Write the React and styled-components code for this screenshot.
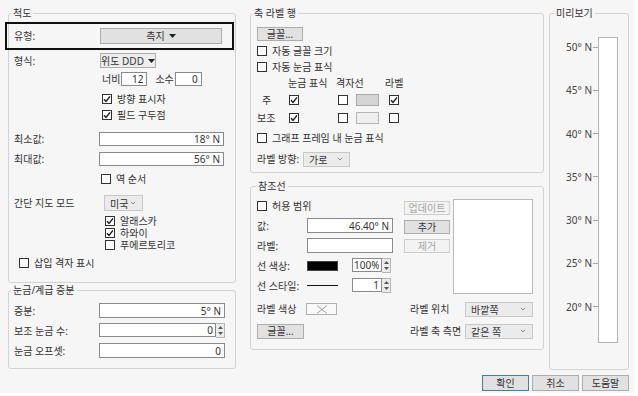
import styled, { createGlobalStyle } from 'styled-components'

const GlobalStyle = createGlobalStyle`
  body {
    margin: 0;
    background: #ffffff;
    font-family: "Noto Sans", "Noto Sans CJK KR", sans-serif;
    font-size: 10px;
    color: #333333;
  }
  * { box-sizing: border-box; }
`

const Dialog = styled.div`
  width: 634px;
  height: 393px;
  background: #f6f6f6;
  padding: 6px 5px 0 8px;
  display: flex;
  flex-direction: column;
`

const Columns = styled.div`
  display: flex;
  align-items: flex-start;
`

const Column = styled.div`
  width: ${p => p.$w}px;
  margin-left: ${p => p.$ml || 0}px;
  display: flex;
  flex-direction: column;
`

const Group = styled.fieldset`
  margin: ${p => p.$mt || 0}px 0 0 0;
  height: ${p => p.$h}px;
  padding: 0 ${p => p.$pr ?? 10}px 0 ${p => p.$pl ?? 5}px;
  border: 1px solid #d3d3d3;
  border-radius: 3px;
  min-width: 0;
`

const Legend = styled.legend`
  margin-left: ${p => p.$offset || 0}px;
  padding: 0 2px;
  height: 14px;
  line-height: 14px;
  font-size: 10px;
`

const Stack = styled.div`
  display: flex;
  flex-direction: column;
`

const Row = styled.div`
  display: grid;
  grid-template-columns: ${p => p.$cols};
  align-items: center;
  height: ${p => p.$h}px;
  margin-top: ${p => p.$mt || 0}px;
`

const TypeRow = styled(Row)`
  margin-left: -9px;
  margin-right: -9px;
  padding-left: 7px;
  border: 2px solid #111111;
`

const Label = styled.span`
  white-space: nowrap;
  line-height: 12px;
`

const Inline = styled.div`
  display: flex;
  align-items: center;
  height: ${p => p.$h}px;
  margin-top: ${p => p.$mt || 0}px;
  padding-left: ${p => p.$pl || 0}px;
  gap: ${p => p.$gap || 0}px;
`

const TextBox = styled.input`
  width: ${p => (p.$w ? `${p.$w}px` : '100%')};
  height: ${p => p.$h || 14}px;
  margin-left: ${p => p.$ml || 0}px;
  border: 1px solid #8a8a8a;
  background: #ffffff;
  padding: 0 ${p => p.$pad ?? 3}px 0 1px;
  font: inherit;
  color: #333333;
  text-align: right;
  outline: none;
`

const Btn = styled.button`
  width: ${p => p.$w}px;
  height: ${p => p.$h || 14}px;
  padding: 0;
  font: inherit;
  line-height: 1;
  color: ${p => (p.disabled ? '#a5a5a5' : '#333333')};
  background: ${p => (p.disabled ? '#f3f3f3' : p.$light ? '#ededed' : '#e1e1e1')};
  border: 1px solid ${p => (p.$primary ? '#3c7fb1' : p.disabled ? '#cdcdcd' : '#adadad')};
  display: flex;
  align-items: center;
  justify-content: center;
  gap: 4px;
`

const Combo = styled.div`
  width: ${p => p.$w}px;
  height: ${p => p.$h || 15}px;
  border: 1px solid #c8c8c8;
  background: #ebebeb;
  display: flex;
  align-items: center;
  justify-content: space-between;
  padding: 0 6px 0 5px;
`

const Box = styled.span`
  width: 10px;
  height: 10px;
  flex: none;
  border: 1px solid #333333;
  background: #ffffff;
  display: inline-flex;
  align-items: center;
  justify-content: center;
`

const CheckRow = styled(Inline)`
  gap: 5px;
`

const Swatch = styled.span`
  width: ${p => p.$w || 23}px;
  height: ${p => p.$h || 12}px;
  margin-left: ${p => p.$ml || 0}px;
  border: 1px solid ${p => p.$line || '#aaaaaa'};
  background: ${p => p.$fill};
  display: inline-flex;
  align-items: center;
  justify-content: center;
`

const LineSample = styled.span`
  width: 31px;
  height: 1px;
  background: #111111;
`

const SpinWrap = styled.div`
  display: flex;
  margin-left: ${p => p.$ml || 0}px;
  height: ${p => p.$h || 15}px;
`

const Spinner = styled.div`
  width: 9px;
  display: flex;
  flex-direction: column;
  border: 1px solid #b5b5b5;
  border-left: none;
  background: #ececec;
  & > span {
    flex: 1;
    display: flex;
    align-items: center;
    justify-content: center;
  }
`

const MarkGrid = styled.div`
  display: grid;
  grid-template-columns: 31px 48px 49px 40px;
  grid-template-rows: 14px 16px 16px;
  row-gap: 2px;
  margin-top: 1px;
  align-items: center;
`

const Cell = styled.div`
  display: flex;
  align-items: center;
  padding-left: ${p => p.$pl || 0}px;
`

const RefTop = styled.div`
  display: flex;
  align-items: flex-start;
  height: 96px;
  margin-top: 5px;
`

const RefForm = styled.div`
  width: 136px;
  display: flex;
  flex-direction: column;
  gap: 5px;
`

const ButtonStack = styled.div`
  width: 46px;
  margin-left: 11px;
  margin-top: 3px;
  display: flex;
  flex-direction: column;
  gap: 5px;
`

const ListBox = styled.div`
  width: 82px;
  height: 95px;
  margin-left: 3px;
  margin-top: 1px;
  background: #ffffff;
  border: 1px solid #b9b9b9;
`

const PreviewBody = styled.div`
  display: flex;
  justify-content: flex-end;
  align-items: flex-start;
  padding-top: 17px;
`

const Axis = styled.div`
  display: flex;
  flex-direction: column;
  gap: 31.3px;
  margin-top: 4px;
`

const Tick = styled.div`
  display: flex;
  align-items: center;
  justify-content: flex-end;
  height: 12px;
  gap: 1px;
  color: #444444;
  white-space: nowrap;
  &::after {
    content: '';
    width: 5px;
    height: 1px;
    background: #a8a8a8;
  }
`

const Bar = styled.div`
  width: 20px;
  height: 306px;
  background: #ffffff;
  border: 1px solid #b3b3b3;
`

const Footer = styled.div`
  display: flex;
  justify-content: flex-end;
  gap: 3px;
  margin-top: 5px;
`

const Caret = () => (
  <svg width="7" height="4" viewBox="0 0 7 4">
    <path d="M0 0 L7 0 L3.5 4 Z" fill="#222" />
  </svg>
)

const Chevron = () => (
  <svg width="6" height="4" viewBox="0 0 6 4">
    <path d="M0.8 0.8 L3 3 L5.2 0.8" stroke="#8a8a8a" strokeWidth="1" fill="none" />
  </svg>
)

const Check = ({ on, children, h = 16, mt, pl }) => (
  <CheckRow $h={h} $mt={mt} $pl={pl}>
    <Box>
      {on && (
        <svg width="8" height="8" viewBox="0 0 8 8">
          <path d="M1 4.2 L3 6.4 L7 1.4" stroke="#222" strokeWidth="1.5" fill="none" />
        </svg>
      )}
    </Box>
    {children && <Label>{children}</Label>}
  </CheckRow>
)

const Spin = ({ value, w, ml, h }) => (
  <SpinWrap $ml={ml} $h={h}>
    <TextBox readOnly value={value} $w={w} $h={h} $pad={2} />
    <Spinner>
      <span>
        <svg width="5" height="3" viewBox="0 0 5 3"><path d="M0 3 L5 3 L2.5 0 Z" fill="#555" /></svg>
      </span>
      <span>
        <svg width="5" height="3" viewBox="0 0 5 3"><path d="M0 0 L5 0 L2.5 3 Z" fill="#555" /></svg>
      </span>
    </Spinner>
  </SpinWrap>
)

const ticks = ['50° N', '45° N', '40° N', '35° N', '30° N', '25° N', '20° N']

export default function App() {
  return (
    <>
      <GlobalStyle />
      <Dialog>
        <Columns>
          <Column $w={228}>
            <Group $h={277}>
              <Legend $offset={-3}>척도</Legend>
              <Stack>
                <TypeRow $cols="86px 122px" $h={28} $mt={2}>
                  <Label>유형:</Label>
                  <Btn $w={122} $h={16}>측지 <Caret /></Btn>
                </TypeRow>
                <Row $cols="86px 56px" $h={14} $mt={3}>
                  <Label>형식:</Label>
                  <Btn $w={56} $h={15} $light>위도 DDD <Caret /></Btn>
                </Row>
                <Inline $h={14} $mt={5} $pl={88}>
                  <Label>너비</Label>
                  <TextBox readOnly value="12" $w={26} $ml={1} />
                  <Label style={{ marginLeft: 8 }}>소수</Label>
                  <TextBox readOnly value="0" $w={27} $ml={1} />
                </Inline>
                <Check on mt={5} pl={88}>방향 표시자</Check>
                <Check on pl={88}>필드 구두점</Check>
                <Row $cols="85px 125px" $h={14} $mt={9}>
                  <Label>최소값:</Label>
                  <TextBox readOnly value="18° N" />
                </Row>
                <Row $cols="85px 125px" $h={14} $mt={6}>
                  <Label>최대값:</Label>
                  <TextBox readOnly value="56° N" />
                </Row>
                <Check mt={5} pl={87}>역 순서</Check>
                <Row $cols="90px 39px" $h={16} $mt={8}>
                  <Label>간단 지도 모드</Label>
                  <Combo $w={39} $h={16}>미국 <Chevron /></Combo>
                </Row>
                <Check on h={12} mt={4} pl={91}>알래스카</Check>
                <Check on h={12} pl={91}>하와이</Check>
                <Check h={12} pl={91}>푸에르토리코</Check>
                <Check mt={4} pl={5}>삽입 격자 표시</Check>
              </Stack>
            </Group>
            <Group $h={86}>
              <Legend $offset={-3}>눈금/계급 증분</Legend>
              <Stack>
                <Row $cols="85px 126px" $h={15} $mt={6}>
                  <Label>증분:</Label>
                  <TextBox readOnly value="5° N" $h={15} />
                </Row>
                <Row $cols="85px 126px" $h={15} $mt={5}>
                  <Label>보조 눈금 수:</Label>
                  <Spin value="0" w={117} />
                </Row>
                <Row $cols="85px 126px" $h={15} $mt={5}>
                  <Label>눈금 오프셋:</Label>
                  <TextBox readOnly value="0" $h={15} />
                </Row>
              </Stack>
            </Group>
          </Column>

          <Column $w={294} $ml={14}>
            <Group $h={167} $pl={6}>
              <Legend $offset={-5}>축 라벨 행</Legend>
              <Stack>
                <Inline $h={14} $mt={7}>
                  <Btn $w={46} $h={14}>글꼴...</Btn>
                </Inline>
                <Check mt={2}>자동 글꼴 크기</Check>
                <Check>자동 눈금 표식</Check>
                <MarkGrid>
                  <Cell />
                  <Cell><Label>눈금 표식</Label></Cell>
                  <Cell><Label>격자선</Label></Cell>
                  <Cell><Label>라벨</Label></Cell>

                  <Cell $pl={5}><Label>주</Label></Cell>
                  <Cell $pl={1}><Check on /></Cell>
                  <Cell $pl={2}><Check /><Swatch $fill="#d5d5d5" $ml={8} /></Cell>
                  <Cell $pl={4}><Check on /></Cell>

                  <Cell><Label>보조</Label></Cell>
                  <Cell $pl={1}><Check on /></Cell>
                  <Cell $pl={2}><Check /><Swatch $fill="#efefef" $line="#b5b5b5" $ml={8} /></Cell>
                  <Cell $pl={4}><Check /></Cell>
                </MarkGrid>
                <Check mt={4}>그래프 프레임 내 눈금 표식</Check>
                <Inline $h={16} $mt={5} $gap={0}>
                  <Label style={{ width: 46 }}>라벨 방향:</Label>
                  <Combo $w={47} $h={15}>가로 <Chevron /></Combo>
                </Inline>
              </Stack>
            </Group>

            <Group $h={171} $mt={6} $pl={6}>
              <Legend $offset={-1}>참조선</Legend>
              <Stack>
                <RefTop>
                  <RefForm>
                    <Check h={15}>허용 범위</Check>
                    <Row $cols="50px 86px" $h={15}>
                      <Label>값:</Label>
                      <TextBox readOnly value="46.40° N" $h={15} />
                    </Row>
                    <Row $cols="50px 86px" $h={15}>
                      <Label>라벨:</Label>
                      <TextBox readOnly value="" $h={15} />
                    </Row>
                    <Row $cols="50px 86px" $h={15}>
                      <Label>선 색상:</Label>
                      <Inline $h={15}>
                        <Swatch $w={31} $h={10} $fill="#000000" $line="#444444" />
                        <Spin value="100%" w={30} ml={14} />
                      </Inline>
                    </Row>
                    <Row $cols="50px 86px" $h={15}>
                      <Label>선 스타일:</Label>
                      <Inline $h={15}>
                        <LineSample />
                        <Spin value="1" w={30} ml={14} />
                      </Inline>
                    </Row>
                  </RefForm>
                  <ButtonStack>
                    <Btn $w={46} disabled>업데이트</Btn>
                    <Btn $w={46}>추가</Btn>
                    <Btn $w={46} disabled>제거</Btn>
                  </ButtonStack>
                  <ListBox />
                </RefTop>
                <Row $cols="49px 104px 55px 68px" $h={16} $mt={7}>
                  <Label>라벨 색상</Label>
                  <Inline $h={16}>
                    <Swatch $w={31} $h={12} $fill="#f9f9f9" $line="#b0b0b0">
                      <svg width="12" height="9" viewBox="0 0 12 9">
                        <path d="M1 0.5 L11 8.5 M11 0.5 L1 8.5" stroke="#9a9a9a" strokeWidth="0.9" />
                      </svg>
                    </Swatch>
                  </Inline>
                  <Label>라벨 위치</Label>
                  <Combo $w={68} $h={15}>바깥쪽 <Chevron /></Combo>
                </Row>
                <Row $cols="153px 55px 68px" $h={16} $mt={6}>
                  <Inline $h={16}>
                    <Btn $w={47} $h={15}>글꼴...</Btn>
                  </Inline>
                  <Label>라벨 축 측면</Label>
                  <Combo $w={68} $h={15}>같은 쪽 <Chevron /></Combo>
                </Row>
              </Stack>
            </Group>
          </Column>

          <Column $w={80} $ml={5}>
            <Group $h={364} $pl={4}>
              <Legend $offset={0}>미리보기</Legend>
              <PreviewBody>
                <Axis>
                  {ticks.map(t => (
                    <Tick key={t}>{t}</Tick>
                  ))}
                </Axis>
                <Bar />
              </PreviewBody>
            </Group>
          </Column>
        </Columns>
        <Footer>
          <Btn $w={47} $h={16} $primary>확인</Btn>
          <Btn $w={47} $h={16}>취소</Btn>
          <Btn $w={47} $h={16}>도움말</Btn>
        </Footer>
      </Dialog>
    </>
  )
}
